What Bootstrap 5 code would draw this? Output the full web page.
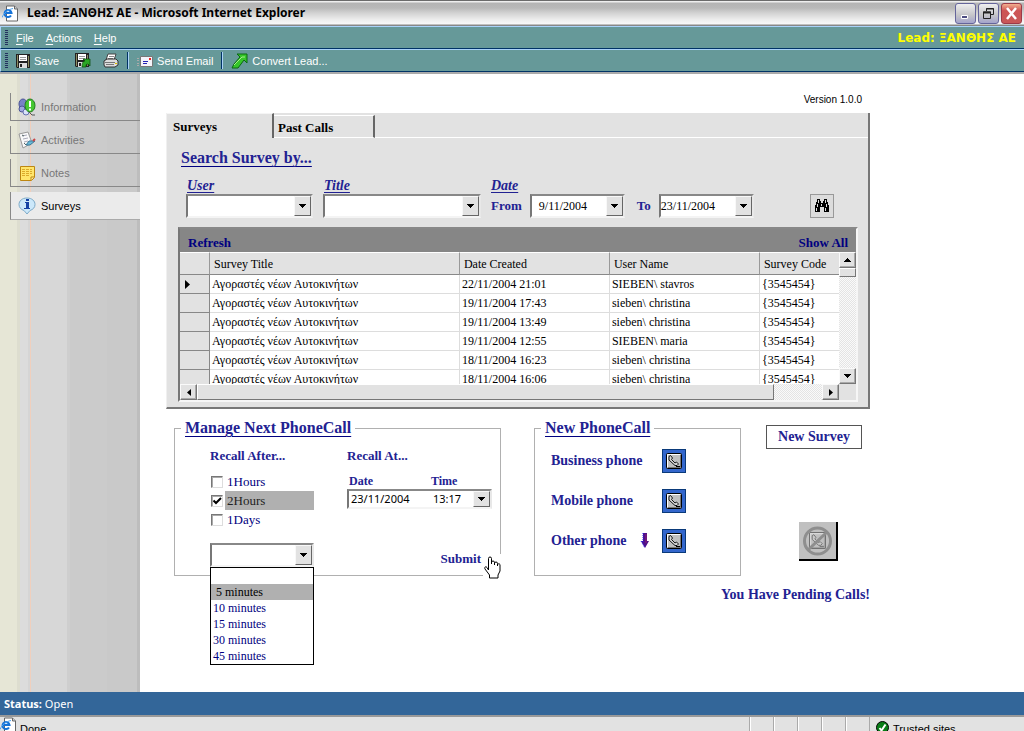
<!DOCTYPE html>
<html lang="en">
<head>
<meta charset="utf-8">
<meta name="viewport" content="width=device-width, initial-scale=1">
<title>Lead: ΞΑΝΘΗΣ ΑΕ - Microsoft Internet Explorer</title>
<link rel="stylesheet" href="https://cdn.jsdelivr.net/npm/bootstrap@5.3.0/dist/css/bootstrap.min.css">
<style>
:root{--face:#e2e2e2;--navy:#000080;--ink:#222292;--teal:#669999;--ui:"Liberation Sans",sans-serif;--wide:"Noto Sans",sans-serif;--book:"Liberation Serif",serif}
body{height:100vh;overflow:hidden;font:11px/16px var(--ui);color:#000;background:#fff}
button,input,select{font:inherit;color:inherit;border-radius:0}
a{color:inherit;text-decoration:none}
svg{display:block;flex:none}
.titlebar{height:26px;background:linear-gradient(#6b6b6b 0 1px,#eee 1px 2px,#b4b4b4 3px,#b9b9b9 8px,#d2d2d2 13px,#eee 20px,#f8f8f8 24px,#888 25px);padding:0 2px 0 2px}
.titlebar h1{font:bold 12px/24px var(--wide);margin:0;padding-left:9px}
.winbtn{width:21px;height:21px;border:1px solid #65659b;border-radius:3px;padding:0;background:linear-gradient(#eee,#c4c4c8 60%,#a4a4cc);display:flex;align-items:center;justify-content:center}
.winbtns{gap:2px}
.winbtn.closer{background:linear-gradient(#f3b090,#cd5555 35%,#c85858);border-color:#9d3a48}
.menubar,.toolbar{background:var(--teal);color:#fff;border-top:1px solid #a9d2f8;border-bottom:1px solid #003366;border-left:1px solid #a9d2f8;height:23px;padding-left:4px}
.menubar u{text-underline-offset:2px}
.leadname{font:bold 12px/20px "DejaVu Sans",sans-serif;color:#ff0}
.grip{width:3px;height:15px;background:repeating-linear-gradient(#23305f 0 1px,transparent 1px 2px)}
.toolbar .sep{width:2px;height:17px;background:linear-gradient(90deg,#003366 50%,#a9d2f8 50%)}
.toolbar button,.menubar button{background:none;border:0;padding:0}
.shell{min-height:0;border-top:2px solid #aaa}
.side{width:140px;gap:5px;padding:19px 0 0 10px;background:linear-gradient(90deg,#e6e6d6 0 17px,#ddddcf 17px 20px,#dcdcdc 20px 28px,#d5d5d5 28px 30px,#f0cfbd 30px 31px,#d7d7d7 31px 67px,#cecece 67px 70px,#cbcbcb 70px 107px,#c9c9c9 107px 137px,#bdbdbd 137px)}
.side a{height:28px;border-left:1px solid #888;border-bottom:1px solid #888;color:#777;padding-left:7px;gap:5px}
.side a.active{background:#ebebeb;color:#000;border-bottom-color:#aaa}
.work{padding:18px 154px 0 26px;min-width:0}
.version{font-size:10px;line-height:16px;padding-right:8px;margin-bottom:5px}
.panel{background:var(--face);border-left:1px solid #f0f0f0;border-right:2px solid #777;border-bottom:2px solid #777}
.tabs{height:25px;font:bold 13px/23px var(--book)}
.tabs button{background:none;border:0;font:inherit;text-align:left;padding:0 0 0 6px}
.tab-on{width:107px;border-right:2px solid #666!important;border-top:1px solid #f5f5f5!important}
.tab-off{width:101px;margin-top:2px;padding-left:4px!important;border-top:1px solid #fff!important;border-right:2px solid #666!important;border-bottom:1px solid #fff!important}
.tabfill{border-bottom:1px solid #fff}
.pbody{padding:10px 10px 5px 11px}
.bighead{font:bold 16px/20px var(--book);color:var(--ink);text-decoration:underline;text-underline-offset:3px;text-decoration-color:var(--navy);margin:0}
.pbody .bighead{padding-left:3px}
.filters{font:bold 13px/16px var(--book);color:var(--ink);padding:10px 24px 9px 8px;gap:10px}
.filters label,.cap{line-height:16px;display:block}
.filters .it{font-size:14px;font-style:italic;text-decoration:underline;text-underline-offset:2px;padding-left:1px}
.filters .fromto{gap:8px}
.combo{display:flex;height:24px;background:#fff;border:2px solid;border-color:#888 #e8e8e8 #f4f4f4 #777;color:#000;font:12px/18px var(--book);position:relative}
.combo input,.combo select{flex:1 1 0;min-width:0;width:0;border:0;background:transparent;padding:0 4px;outline:0;appearance:none}
.combo .dd{width:17px;flex:none;padding:0;background:var(--face);border:1px solid;border-color:#f8f8f8 #666 #666 #f8f8f8;display:flex;align-items:center;justify-content:center;pointer-events:none}
.w-user{width:127px}.w-title{width:158px}.w-date{width:95px}
.combo.picker{height:20px;font:11px/16px var(--wide)}
.combo.picker input{padding:0 2px}
.combo.picker input:first-child{flex:0 0 82px}
.findbtn{width:24px;height:24px;padding:0;border:1px solid #999;background:#dcdcdc;display:flex;align-items:center;justify-content:center}
.sheet{border:2px solid;border-color:#888 #f6f6f6 #f6f6f6 #777;background:var(--face)}
.sheetcap{height:23px;background:#868686;font:bold 13px/24px var(--book);color:var(--navy);padding:2px 8px 0 8px}
.sheetcap button{border:0;background:none;padding:0}
.view{height:132px;overflow:hidden;min-width:0;background:#fff}
.records{table-layout:fixed;width:100%;border-collapse:separate;border-spacing:0;font:12px/18px var(--book)}
.records th{font-weight:400;height:23px;background:var(--face);border-top:1px solid #fff;border-bottom:1px solid #888;border-right:1px solid #999;padding:0 0 0 4px;white-space:nowrap}
.records th:last-child,.records td:last-child{border-right:0}
.records td{height:19px;padding:1px 0 0 2px;border-right:1px solid #ddd;border-bottom:1px solid #ddd;white-space:nowrap;line-height:17px}
.records .mark-col{background:var(--face);border-right:1px solid #888;border-bottom:1px solid #888;padding:0 0 0 5px}
.sb{background:repeating-conic-gradient(#fafafa 0 25%,#e4e4e4 0 50%) 0 0/2px 2px}
.sb-v{width:17px;flex:none}
.sbtn{background:var(--face);border:1px solid;border-color:#fafafa #777 #777 #fafafa;box-shadow:inset -1px -1px #aaa;padding:0;width:17px;height:16px;flex:none;display:flex;align-items:center;justify-content:center}
.thumb-v{height:9px;width:17px;background:var(--face);border:1px solid;border-color:#fff #777 #777 #fff}
.thumb-h{background:var(--face);border:1px solid;border-color:#fff #777 #777 #fff;flex:0 1 577px}
.lower{padding:9px 8px 0 8px;gap:33px}
.group{border:1px solid #b0b0b0;margin:0;padding:0;min-width:0;position:relative}
.group legend{float:none;width:auto;margin:0 0 0 6px;padding:0 4px;line-height:20px}
.g-recall{flex:1 1 327px;height:158px}
.g-phone{flex:0 0 207px;height:158px}
.recall{padding:10px 8px 0 35px;gap:32px}
.recall-left{width:104px}
.recall-at{padding-left:1px}
.cap{font:bold 13px/16px var(--book);color:var(--ink)}
.subcap{font-size:12px;padding:9px 0 0 2px}
.subcap label:first-child{width:82px}
.checks{font:13px/19px var(--book);color:var(--navy);padding:8px 0 14px}
.checks label{flex:1;padding-left:2px;margin-left:2px}
.checks .picked{background:#b0b0b0;color:#222}
.checks input{appearance:none;width:12px;height:12px;margin:0 0 0 1px;border:1px solid;border-color:#777 #ddd #ddd #777;box-shadow:inset 1px 1px #aaa;background:#fff}
.checks input:checked{background:url("data:image/svg+xml,%3Csvg xmlns='http://www.w3.org/2000/svg' viewBox='0 0 10 10'%3E%3Cpath d='M1.500 4.500 4 7l5-5' fill='none' stroke='%23000' stroke-width='2'/%3E%3C/svg%3E") center/10px}
.options{position:absolute;left:0;top:100%;width:104px;border:1px solid #000;background:#fff;font:12px/16px var(--book);color:var(--navy);z-index:3}
.options li{height:16px;padding-left:2px;white-space:pre}
.options .hot{background:#b0b0b0;color:#000}
.submit{border:0;background:none;padding:0;font:bold 13px/16px var(--book);color:var(--ink);margin-right:11px}
.pointer{position:absolute;right:-5px;bottom:-5px;background:#fff}
.phones{font:bold 14px/24px var(--book);color:var(--ink);padding:11px 0 0 16px;gap:16px}
.phones>div{width:135px}
.dial{width:24px;height:24px;border:1px solid #0a3a7a;background:#3366cc;padding:0;display:flex;align-items:center;justify-content:center}
.rightcol{width:96px;flex:none;margin-left:-8px}
.newsurvey{width:96px;height:24px;margin-top:7px;border:1px solid #555;background:#fff;font:bold 14px/20px var(--book);color:var(--ink);padding:0;white-space:nowrap}
.nocall{width:39px;height:39px;margin:73px 24px 0 0;padding:0;background:#c0c0c0;border:solid #000;border-width:0 2px 2px 0}
.pending{font:bold 14px/20px var(--book);color:var(--ink);padding-top:9px}
.status{height:23px;background:#336699;color:#fff;font-family:var(--wide);line-height:23px;padding-left:4px}
.iebar{height:16px;overflow:hidden;background:var(--face);border-top:2px solid #999;flex:none;line-height:16px}
.iebar .cell{width:24px;height:16px;border-left:1px solid #aaa;box-shadow:inset 1px 0 #fff}
.zone{width:155px;height:16px;padding-left:6px;border-left:1px solid #aaa}
</style>
</head>
<body class="d-flex flex-column">
<svg width="0" height="0" class="position-absolute" aria-hidden="true">
<defs>
<symbol id="down" viewBox="0 0 7 4"><path d="M0 0h7v1H6v1H5v1H4v1H3V3H2V2H1V1H0z"/></symbol>
<symbol id="floppy" viewBox="0 0 14 14"><path d="M0 0h14v14H1L0 13z" fill="#222"/><path d="M3 1h8v6H3z" fill="#fff"/><path d="M4 3.500h6M4 5.500h6" stroke="#999"/><path d="M3 9h8v5H3z" fill="#ddd"/><path d="M4 10h2v3H4z" fill="#222"/><path d="M1.500 1v12M12.500 2v11" stroke="#8c8c60" fill="none"/></symbol>
<symbol id="handset" viewBox="0 0 16 16"><rect x=".5" y=".5" width="15" height="15" rx="1" fill="#c0c0c0" stroke="#000"/><path d="M1.500 14V1.500H14" stroke="#fff" fill="none"/><path d="M14.500 2v12.500H2" stroke="#777" fill="none"/><path d="M3 3.500l1.500-1 2 2.500-1 1.500 3.500 3.500 1.500-1 2 2-1.500 1.500H9L3 7z" fill="#d8d8d8" stroke="#000" stroke-width=".9"/><path d="M10 13.500h4" fill="none" stroke="#000"/></symbol>
<symbol id="ie" viewBox="0 0 16 16"><path d="M4.500.500h8l3 3v12h-11z" fill="#fff" stroke="#666"/><path d="M12.500.500v3h3" fill="#ccc" stroke="#666"/><path d="M9 10A3.500 3.500 0 1 1 9.500 7.500H3" fill="none" stroke="#1673d8" stroke-width="2"/><path d="M0 12C2 7 6 4 11 3" fill="none" stroke="#51a4ef"/></symbol>
</defs>
</svg>

<header class="titlebar d-flex align-items-center flex-shrink-0">
<svg width="16" height="17"><use href="#ie"/></svg>
<h1 class="flex-grow-1">Lead: ΞΑΝΘΗΣ ΑΕ - Microsoft Internet Explorer</h1>
<div class="winbtns d-flex">
<button class="winbtn" aria-label="Minimize"><svg width="13" height="13"><path d="M2.500 8.500h6v3h-6z" fill="#4d4d82" stroke="#fff"/></svg></button>
<button class="winbtn" aria-label="Restore"><svg width="13" height="13" fill="none"><path d="M4.500 4V1.500h7v6H9" stroke="#222"/><path d="M4 2h8" stroke="#222"/><path d="M1.500 5h7v6.500h-7z" stroke="#222"/><path d="M1 5.500h8" stroke="#222" stroke-width="2"/></svg></button>
<button class="winbtn closer" aria-label="Close"><svg width="13" height="13"><path d="M2 1l9 11M11 1L2 12" stroke="#fff" stroke-width="2.500"/></svg></button>
</div>
</header>

<nav class="menubar d-flex align-items-center flex-shrink-0 pe-2" aria-label="Menu">
<span class="grip"></span>
<button class="ms-2"><u>F</u>ile</button>
<button class="ms-2 ps-1"><u>A</u>ctions</button>
<button class="ms-2 ps-1"><u>H</u>elp</button>
<span class="leadname ms-auto">Lead: ΞΑΝΘΗΣ ΑΕ</span>
</nav>
<div class="toolbar d-flex align-items-center flex-shrink-0" role="toolbar">
<span class="grip me-2"></span>
<button class="d-flex align-items-center gap-1"><svg width="14" height="14"><use href="#floppy"/></svg>Save</button>
<button class="ms-3" aria-label="Save and close"><svg width="16" height="15" viewBox="0 0 16 15"><use href="#floppy" width="14" height="14"/><path d="M7 14c0-4 1-6 3-6L8 6h7v7l-2-2c-2 0-2 1-2 3z" fill="#2ba624" stroke="#064b06" stroke-width=".7"/></svg></button>
<button class="ms-2 ps-1" aria-label="Print"><svg width="16" height="15" viewBox="0 0 16 15"><path d="M5 1h8l-2 6H3z" fill="#fff" stroke="#444"/><path d="M6 3.500h5M5 5.500h5" stroke="#888"/><path d="M1 8l3-2h9l2 2v4l-3 2H2l-1-2z" fill="#ddd" stroke="#333"/><path d="M2 9.500h10M3 11.500h8" stroke="#777"/><path d="M12 10.500h2" stroke="#e0c000"/></svg></button>
<span class="sep mx-2 ps-0"></span>
<button class="d-flex align-items-center gap-1"><svg width="16" height="12" viewBox="0 0 16 12"><path d="M0 3.500h2M0 5.500h2M0 8.500h2M0 10.500h2" stroke="#aaa"/><path d="M3.500 1.500h12v10h-12z" fill="#f4f4fa" stroke="#777"/><path d="M6 6.500h5M6 8.500h4" stroke="#2222b5"/><path d="M12 3h2v2h-2z" fill="#e22"/></svg>Send Email</button>
<span class="sep mx-2"></span>
<button class="d-flex align-items-center gap-1"><svg width="17" height="16" viewBox="0 0 17 16"><path d="M6 1h10v9l-3-3-6 8H1l2-4 6-7z" fill="#35c629" stroke="#0a6812"/><path d="M3 12l8-8h3" fill="none" stroke="#a7ef8b"/></svg>Convert Lead...</button>
</div>

<div class="shell d-flex flex-grow-1">
<nav class="side d-flex flex-column flex-shrink-0" aria-label="Sections">
<a href="#" class="d-flex align-items-center"><svg width="18" height="18" viewBox="0 0 18 18"><ellipse cx="5" cy="6" rx="4" ry="5" fill="#7782c8" stroke="#4b5595"/><circle cx="4" cy="11" r="3" fill="#9fa6e2" stroke="#4b5595"/><circle cx="8" cy="14" r="3" fill="#d8e1fa" stroke="#6670b0"/><ellipse cx="12" cy="7.500" rx="5" ry="6.500" fill="#45c832" stroke="#227b20"/><path d="M12 3v6M12 10.500v2" stroke="#fff" stroke-width="2"/><path d="M11 14l3 3h3" stroke="#555" fill="none"/></svg>Information</a>
<a href="#" class="d-flex align-items-center"><svg width="18" height="18" viewBox="0 0 18 18"><path d="M1 3l9-2 4 11-9 5z" fill="#f8f8fa" stroke="#999"/><path d="M4 5l5-1M5 8l5-1M6 11l4-1" stroke="#aab"/><path d="M4 4l2 1M6 12l2 2" stroke="#566"/><path d="M8 14l3-4 6 0-5 4z" fill="#68b8d8" stroke="#3d7998"/><path d="M15 10l2-2" stroke="#c44" stroke-width="2"/></svg>Activities</a>
<a href="#" class="d-flex align-items-center"><svg width="18" height="18" viewBox="0 0 18 18"><path d="M2.500 2.500h14v11l-3 3h-11z" fill="#ffe56c" stroke="#bd8613"/><path d="M4 5.500h10M4 7.500h10M4 9.500h10M4 11.500h8" stroke="#dba92b" stroke-dasharray="3 1"/><path d="M13 16v-3h3" fill="#fff0aa" stroke="#bd8613"/></svg>Notes</a>
<a href="#" class="active d-flex align-items-center"><svg width="18" height="18" viewBox="0 0 18 18"><path d="M9 1c5 0 8 3 8 6.500 0 3-2 5-5 6L9 17l-3-3.500c-3-1-5-3-5-6C1 4 4 1 9 1z" fill="#cce8fa" stroke="#7daac8"/><path d="M8 2h3v2H8zM7 5h4v6h1v1H6v-1h2V6H7z" fill="#1442a4"/></svg>Surveys</a>
</nav>

<main class="work flex-grow-1">
<div class="version text-end">Version 1.0.0</div>
<section class="panel">
<div class="tabs d-flex" role="tablist">
<button class="tab-on" role="tab" aria-selected="true">Surveys</button>
<button class="tab-off" role="tab" aria-selected="false">Past Calls</button>
<span class="tabfill flex-grow-1"></span>
</div>
<div class="pbody">
<h2 class="bighead">Search Survey by...</h2>
<form class="filters d-flex align-items-end">
<div><label class="it" for="user">User</label>
<div class="combo w-user"><select id="user"><option></option></select><span class="dd"><svg width="7" height="4"><use href="#down"/></svg></span></div></div>
<div><label class="it" for="title">Title</label>
<div class="combo w-title"><select id="title"><option></option></select><span class="dd"><svg width="7" height="4"><use href="#down"/></svg></span></div></div>
<div><span class="it d-block ps-0">Date</span>
<div class="fromto d-flex align-items-center"><label for="from">From</label>
<div class="combo w-date"><input id="from" value=" 9/11/2004"><button type="button" class="dd" aria-label="Choose date"><svg width="7" height="4"><use href="#down"/></svg></button></div>
<label class="ps-1" for="to">To</label>
<div class="combo w-date"><input id="to" class="px-0" value="23/11/2004"><button type="button" class="dd" aria-label="Choose date"><svg width="7" height="4"><use href="#down"/></svg></button></div></div></div>
<button type="button" class="findbtn ms-auto" aria-label="Find"><svg width="16" height="16" viewBox="0 0 16 16"><path d="M3 1h3v2h1v2h2V3h1V1h3v3h1v3h1v7h-5V9H6v5H1V7h1V4h1z"/><path d="M4.500 2v3M3.500 6v3M2.500 10v3M11.500 2v3M12.500 6v3M11.500 10v3M7.500 6v2" stroke="#ddd"/></svg></button>
</form>

<div class="sheet">
<div class="sheetcap d-flex justify-content-between"><button>Refresh</button><button>Show All</button></div>
<div class="d-flex">
<div class="view flex-grow-1">
<table class="records">
<colgroup><col style="width:30px"><col><col style="width:150px"><col style="width:150px"><col style="width:79px"></colgroup>
<thead><tr><th></th><th>Survey Title</th><th>Date Created</th><th>User Name</th><th>Survey Code</th></tr></thead>
<tbody>
<tr><td class="mark-col"><svg width="5" height="9"><path d="M0 0l5 4.500L0 9z"/></svg></td><td>Αγοραστές νέων Αυτοκινήτων</td><td>22/11/2004 21:01</td><td>SIEBEN\ stavros</td><td>{3545454}</td></tr>
<tr><td class="mark-col"></td><td>Αγοραστές νέων Αυτοκινήτων</td><td>19/11/2004 17:43</td><td>sieben\ christina</td><td>{3545454}</td></tr>
<tr><td class="mark-col"></td><td>Αγοραστές νέων Αυτοκινήτων</td><td>19/11/2004 13:49</td><td>sieben\ christina</td><td>{3545454}</td></tr>
<tr><td class="mark-col"></td><td>Αγοραστές νέων Αυτοκινήτων</td><td>19/11/2004 12:55</td><td>SIEBEN\ maria</td><td>{3545454}</td></tr>
<tr><td class="mark-col"></td><td>Αγοραστές νέων Αυτοκινήτων</td><td>18/11/2004 16:23</td><td>sieben\ christina</td><td>{3545454}</td></tr>
<tr><td class="mark-col"></td><td>Αγοραστές νέων Αυτοκινήτων</td><td>18/11/2004 16:06</td><td>sieben\ christina</td><td>{3545454}</td></tr>
</tbody>
</table>
</div>
<div class="sb sb-v d-flex flex-column">
<button class="sbtn" aria-label="Scroll up"><svg width="7" height="4"><use href="#down" transform="rotate(180 3.500 2)"/></svg></button>
<div class="thumb-v"></div>
<button class="sbtn mt-auto" aria-label="Scroll down"><svg width="7" height="4"><use href="#down"/></svg></button>
</div>
</div>
<div class="d-flex">
<div class="sb d-flex flex-grow-1">
<button class="sbtn" aria-label="Scroll left"><svg width="4" height="7"><path d="M4 0v7L0 3.500z"/></svg></button>
<div class="thumb-h"></div>
<button class="sbtn ms-auto" aria-label="Scroll right"><svg width="4" height="7"><path d="M0 0v7l4-3.500z"/></svg></button>
</div>
<div class="sb-v"></div>
</div>
</div>
</div>
</section>

<div class="lower d-flex">
<fieldset class="group g-recall">
<legend class="bighead">Manage Next PhoneCall</legend>
<div class="recall d-flex">
<div class="recall-left">
<div class="cap ps-0">Recall After...</div>
<div class="checks">
<div class="d-flex align-items-center"><input type="checkbox" id="h1"><label for="h1">1Hours</label></div>
<div class="d-flex align-items-center"><input type="checkbox" id="h2" checked><label for="h2" class="picked">2Hours</label></div>
<div class="d-flex align-items-center"><input type="checkbox" id="d1"><label for="d1">1Days</label></div>
</div>
<div class="position-relative">
<div class="combo"><select aria-label="Minutes"><option></option></select><span class="dd"><svg width="7" height="4"><use href="#down"/></svg></span></div>
<ul class="options list-unstyled mb-0" role="listbox"><li role="option"></li><li role="option" class="hot"> 5 minutes</li><li role="option">10 minutes</li><li role="option">15 minutes</li><li role="option">30 minutes</li><li role="option">45 minutes</li></ul>
</div>
</div>
<div class="recall-at flex-grow-1 d-flex flex-column">
<div class="cap">Recall At...</div>
<div class="cap subcap d-flex"><label for="when">Date</label><label for="time">Time</label></div>
<div class="combo picker"><input id="when" value="23/11/2004"><input id="time" value="13:17"><button type="button" class="dd" aria-label="Choose"><svg width="7" height="4"><use href="#down"/></svg></button></div>
<button class="submit mt-auto ms-auto">Submit</button>
</div>
</div>
<svg class="pointer" width="22" height="26" viewBox="0 0 22 26"><path d="M5.500 16V4.500a1.500 1.500 0 0 1 3 0V10V8.500a1.500 1.500 0 0 1 3 0V11V9.500a1.500 1.500 0 0 1 3 0V12v-1.500a1.500 1.500 0 0 1 2.500 0V17l-2 4v3H6.500v-3L2 15c-1-2 1-3 2-1.500z" fill="#fff" stroke="#000"/></svg>
</fieldset>
<fieldset class="group g-phone">
<legend class="bighead">New PhoneCall</legend>
<div class="phones d-flex flex-column">
<div class="d-flex justify-content-between">Business phone<button class="dial" aria-label="Call business phone"><svg width="16" height="16"><use href="#handset"/></svg></button></div>
<div class="d-flex justify-content-between">Mobile phone<button class="dial" aria-label="Call mobile phone"><svg width="16" height="16"><use href="#handset"/></svg></button></div>
<div class="d-flex justify-content-between align-items-center">Other phone<svg width="9" height="16" viewBox="0 0 9 16"><path d="M3 0h4v8h2l-4 7-4-7h2z" fill="#50108a"/><path d="M3 0v9M1 8l4 7" stroke="#22e" stroke-dasharray="1 1"/><path d="M6 1v9" stroke="#902070"/></svg><button class="dial" aria-label="Call other phone"><svg width="16" height="16"><use href="#handset"/></svg></button></div>
</div>
</fieldset>
<div class="rightcol d-flex flex-column align-items-end">
<button class="newsurvey">New Survey</button>
<button class="nocall" aria-label="Pending calls"><svg width="37" height="37" viewBox="0 0 37 37"><g opacity=".4"><use href="#handset" x="10" y="10" width="17" height="17"/></g><circle cx="18.500" cy="19" r="13" fill="none" stroke="#8e8e8e" stroke-width="3"/><path d="M28 10L9 28" stroke="#8e8e8e" stroke-width="3"/></svg></button>
</div>
</div>
<div class="pending text-end">You Have Pending Calls!</div>
</main>
</div>
<div class="status flex-shrink-0"><b>Status:</b> Open</div>
<footer class="iebar d-flex">
<svg width="16" height="17"><use href="#ie"/></svg><span class="ps-1 pt-1">Done</span>
<span class="cell ms-auto"></span><span class="cell"></span><span class="cell"></span><span class="cell"></span><span class="cell"></span>
<span class="zone d-flex"><svg width="13" height="13" class="mt-1"><circle cx="6.500" cy="6.500" r="6" fill="#087d16" stroke="#000"/><path d="M3.500 7l2 2.500 4-6" fill="none" stroke="#fff" stroke-width="2"/></svg><span class="ps-1 pt-1">Trusted sites</span></span>
</footer>
<script src="https://cdn.jsdelivr.net/npm/bootstrap@5.3.0/dist/js/bootstrap.bundle.min.js"></script>
</body>
</html>
